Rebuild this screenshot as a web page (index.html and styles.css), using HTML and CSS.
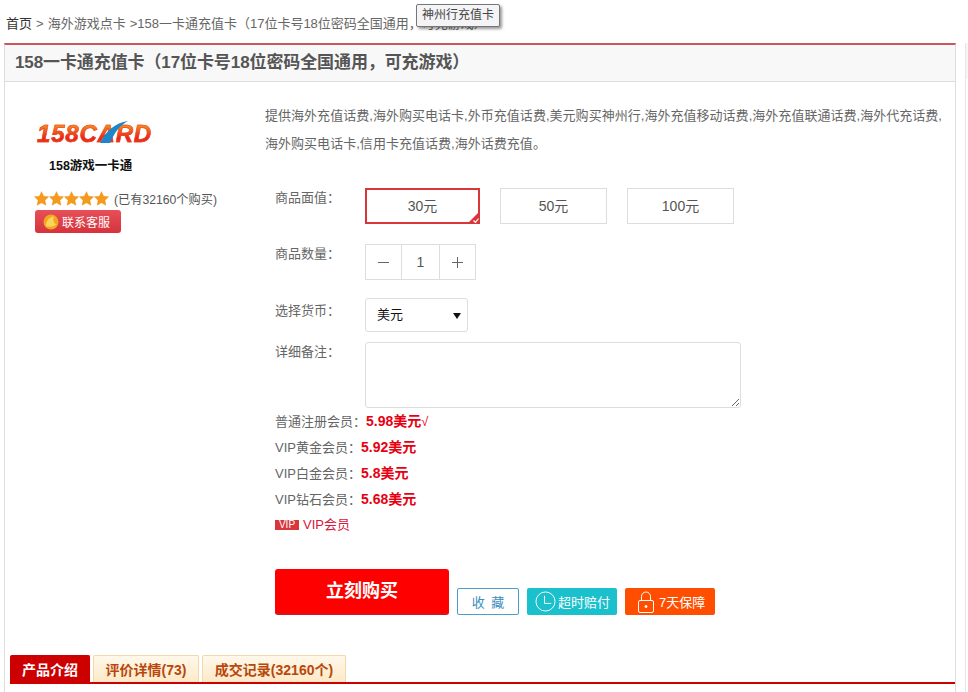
FILE: index.html
```html
<!DOCTYPE html>
<html lang="zh-CN">
<head>
<meta charset="utf-8">
<title>158一卡通充值卡</title>
<link rel="stylesheet" href="styles.css">
</head>
<body>
<nav class="crumbs"><a class="home">首页</a> &gt; 海外游戏点卡 &gt;158一卡通充值卡（17位卡号18位密码全国通用，可充游戏）</nav>
<div class="tooltip">神州行充值卡</div>
<div class="page">
  <main class="panel">
    <h1 class="title">158一卡通充值卡（17位卡号18位密码全国通用，可充游戏）</h1>
    <div class="content">
      <aside class="side">
        <div class="logo">
          <span class="logo-word">158CARD</span>
          <svg class="swoosh" width="28" height="22" viewBox="0 0 28 22"><path d="M0 22C6 10 15 2 28 0C20 4 14 12 10 22Z" fill="#1d86c8"/></svg>
        </div>
        <div class="logo-sub">158游戏一卡通</div>
        <div class="rating">
          <span class="stars">
            <svg width="15" height="15" viewBox="0 0 24 24"><path class="star" d="M12 1l3.400 7.300 7.900 1-5.800 5.500 1.500 7.900-7-3.900-7 3.900 1.500-7.900L.7 9.300l7.900-1z"/></svg>
            <svg width="15" height="15" viewBox="0 0 24 24"><path class="star" d="M12 1l3.400 7.300 7.900 1-5.800 5.500 1.500 7.900-7-3.900-7 3.900 1.500-7.900L.7 9.300l7.900-1z"/></svg>
            <svg width="15" height="15" viewBox="0 0 24 24"><path class="star" d="M12 1l3.400 7.300 7.900 1-5.800 5.500 1.500 7.900-7-3.900-7 3.900 1.500-7.900L.7 9.300l7.900-1z"/></svg>
            <svg width="15" height="15" viewBox="0 0 24 24"><path class="star" d="M12 1l3.400 7.300 7.900 1-5.800 5.500 1.500 7.900-7-3.900-7 3.900 1.500-7.900L.7 9.300l7.900-1z"/></svg>
            <svg width="15" height="15" viewBox="0 0 24 24"><path class="star" d="M12 1l3.400 7.300 7.900 1-5.800 5.500 1.500 7.900-7-3.900-7 3.900 1.500-7.900L.7 9.300l7.900-1z"/></svg>
          </span>
          <span class="sold">(已有32160个购买)</span>
        </div>
        <a class="service">
          <svg width="16" height="16" viewBox="0 0 16 16"><circle cx="8" cy="8" r="7.500" fill="#f2a81e"/><path d="M3 12C3 7 6 3 11 2.500C9.500 6 10 8.500 13.500 10.500C10 13 6 13.500 3 12Z" fill="#fbd45e"/></svg>
          <span>联系客服</span>
        </a>
      </aside>
      <section class="detail">
        <p class="desc">提供海外充值话费,海外购买电话卡,外币充值话费,美元购买神州行,海外充值移动话费,海外充值联通话费,海外代充话费,海外购买电话卡,信用卡充值话费,海外话费充值。</p>
        <div class="row row-face">
          <span class="label">商品面值：</span>
          <div class="faces">
            <a class="face face-on">30元<svg class="tick" width="13" height="13" viewBox="0 0 13 13"><path d="M13 0V13H0Z" fill="#d9363c"/><path d="M6.500 9.500l2 1.800 3-3.800" fill="none" stroke="#fff" stroke-width="1.200"/></svg></a>
            <a class="face">50元</a>
            <a class="face">100元</a>
          </div>
        </div>
        <div class="row row-qty">
          <span class="label">商品数量：</span>
          <div class="qty">
            <span class="qty-btn"><svg width="11" height="11" viewBox="0 0 11 11"><path d="M0 5.500H11" stroke="#666"/></svg></span>
            <span class="qty-num">1</span>
            <span class="qty-btn"><svg width="11" height="11" viewBox="0 0 11 11"><path d="M0 5.500H11M5.500 0V11" stroke="#666"/></svg></span>
          </div>
        </div>
        <div class="row row-cur">
          <span class="label label-cur">选择货币：</span>
          <div class="select"><span>美元</span><i class="caret"></i></div>
        </div>
        <div class="row row-note">
          <span class="label">详细备注：</span>
          <textarea class="note"></textarea>
        </div>
        <ul class="prices">
          <li>普通注册会员：<b>5.98美元</b><em>√</em></li>
          <li>VIP黄金会员：<b>5.92美元</b></li>
          <li>VIP白金会员：<b>5.8美元</b></li>
          <li>VIP钻石会员：<b>5.68美元</b></li>
          <li class="vip"><span class="vip-tag">VIP</span>VIP会员</li>
        </ul>
        <div class="actions">
          <a class="buy">立刻购买</a>
          <a class="fav">收 藏</a>
          <a class="promise promise-time">
            <svg width="21" height="21" viewBox="0 0 22 22" fill="none" stroke="#fff"><circle cx="11" cy="11" r="10"/><path d="M10 5V13H17"/></svg>
            <span>超时赔付</span>
          </a>
          <a class="promise promise-safe">
            <svg width="18" height="22" viewBox="0 0 18 22" fill="none" stroke="#fff"><rect x="1.500" y="9.500" width="15" height="12" rx="1.500"/><path d="M4.500 9.500V5.500a4.500 4.500 0 0 1 9 0V9.500"/><circle cx="9" cy="15.500" r="1" fill="#fff"/></svg>
            <span>7天保障</span>
          </a>
        </div>
      </section>
    </div>
    <div class="tabs">
      <a class="tab tab-on">产品介绍</a>
      <a class="tab">评价详情(73)</a>
      <a class="tab">成交记录(32160个)</a>
    </div>
  </main>
  <div class="next-col"></div>
</div>
</body>
</html>
```
FILE: styles.css
```css
* { box-sizing: border-box; }
html, body { margin: 0; height: 692px; overflow: hidden; background: #fff; }
body {
  position: relative;
  font-family: "Liberation Sans", "Noto Sans CJK SC", sans-serif;
  font-size: 13px;
  color: #666;
}
.crumbs { height: 43px; padding: 15px 0 0 6px; line-height: 17px; white-space: nowrap; word-spacing: .4px; color: #666; }
.home { color: #333; }
.tooltip {
  position: absolute; left: 416px; top: 4px; width: 84px; height: 23px;
  padding-left: 5px; line-height: 21px; font-size: 12px; color: #444;
  background: #f4f4f6; border: 1px solid #767676; border-radius: 2px;
  box-shadow: 2px 2px 3px rgba(0,0,0,.4);
}
.page { display: flex; width: 968px; padding-left: 4px; }
.panel { flex: none; width: 952px; height: 649px; border-left: 1px solid #ddd; border-right: 1px solid #ddd; border-top: 2px solid #c9585c; }
.next-col { flex: none; width: 3px; margin-left: 9px; height: 649px; border-left: 1px solid #e6e6e6; background: linear-gradient(180deg, #f6f6f6 36px, #fff 36px); }
.title {
  margin: 0; height: 37px; padding-left: 10px; line-height: 35px;
  font-size: 17px; font-weight: bold; letter-spacing: -.1px; color: #555;
  background: #f8f8f8; border-bottom: 1px solid #ddd;
}
.content { display: flex; height: 573px; }
.side { width: 260px; padding: 38px 0 0 28px; }
.logo { position: relative; width: 120px; height: 28px; margin: 0 0 0 4px; }
.logo-word {
  display: block; font: italic bold 24px/28px "Liberation Sans", sans-serif; letter-spacing: .8px;
  background: linear-gradient(180deg, #f7881f 20%, #e8241c 65%, #f05a1c);
  -webkit-background-clip: text; background-clip: text; color: transparent;
  -webkit-text-stroke: .5px #ea3a1c;
}
.swoosh { position: absolute; left: 63px; top: 1px; }
.logo-sub { margin: 10px 0 0 16px; font-size: 12.500px; font-weight: bold; line-height: 17px; color: #111; }
.rating { display: flex; align-items: center; height: 17px; margin: 15px 0 0 1px; }
.stars { display: flex; width: 75px; }
.star { fill: #f79a1a; stroke: #e08a10; stroke-width: .6; }
.sold { margin-left: 5px; font-size: 12.200px; color: #555; }
.service {
  display: flex; align-items: center; gap: 3px; width: 86px; height: 23px; margin: 3px 0 0 2px; padding-left: 8px;
  color: #fff; font-size: 12px; border-radius: 3px;
  background: linear-gradient(180deg, #e75058, #d6323c);
}
.detail { flex: 1; padding: 20px 0 0 0; }
.desc { margin: 0; width: 682px; line-height: 28px; letter-spacing: .03px; }
.row { display: flex; margin-left: 10px; }
.label { width: 90px; line-height: 20px; color: #666; flex: none; }
.label-cur { padding-top: 3px; }
.row-face { margin-top: 30px; }
.faces { display: flex; gap: 20px; }
.face { position: relative; width: 107px; height: 36px; line-height: 34px; font-size: 14px; text-align: center; border: 1px solid #ddd; color: #555; }
.face-on { width: 115px; border: 2px solid #d9363c; line-height: 32px; }
.tick { position: absolute; right: -2px; bottom: -2px; }
.row-qty { margin-top: 20px; }
.qty { display: flex; width: 111px; height: 36px; border: 1px solid #ddd; }
.qty-btn { display: flex; align-items: center; justify-content: center; width: 35px; }
.qty-num { width: 40px; line-height: 34px; font-size: 14px; text-align: center; border-left: 1px solid #ddd; border-right: 1px solid #ddd; color: #555; }
.row-cur { margin-top: 18px; }
.select { position: relative; width: 103px; height: 34px; padding-left: 11px; line-height: 32px; color: #111; border: 1px solid #ddd; border-radius: 3px; }
.caret { position: absolute; right: 6px; top: 14px; border: 4px solid transparent; border-top: 6px solid #111; border-bottom: 0; }
.row-note { margin-top: 10px; }
.note { display: block; width: 376px; height: 66px; padding: 0; margin: 0; border: 1px solid #ddd; border-radius: 3px; background: #fff; }
.prices { list-style: none; margin: 0 0 0 10px; padding: 0; line-height: 26px; }
.prices li { height: 26px; }
.prices b { color: #e60012; font-size: 14px; }
.prices em { font-style: normal; color: #e60012; }
.vip { color: #d9163c; display: flex; align-items: center; }
.vip-tag { width: 24px; height: 10px; margin-right: 4px; font-size: 10px; line-height: 10px; text-align: center; color: #fff; background: #d9363c; }
.actions { display: flex; align-items: flex-end; margin: 31px 0 0 10px; }
.buy {
  width: 174px; height: 46px; line-height: 44px; text-align: center;
  font-size: 18px; font-weight: bold; color: #fff; background: #f00;
  border-radius: 3px; border-bottom: 2px solid #d8141c;
}
.fav { width: 62px; height: 27px; margin-left: 8px; line-height: 27px; text-align: center; word-spacing: 3px; color: #3a8fc0; border: 1px solid #4a9ec9; border-radius: 2px; }
.promise { display: flex; align-items: center; width: 90px; height: 27px; margin-left: 8px; padding-left: 8px; gap: 2px; color: #fff; border-radius: 2px; }
.promise-time { background: #1ac0cc; }
.promise-safe { background: #ff4e00; padding-left: 12px; gap: 4px; }
.tabs { display: flex; gap: 3px; height: 29px; margin-left: 5px; border-bottom: 2px solid #c00; }
.tab {
  width: 106px; height: 27px; line-height: 28px; text-align: center;
  font-size: 14px; font-weight: bold; color: #b8470c;
  background: linear-gradient(180deg, #fff8ea, #fde9c8);
  border: 1px solid #f3d8ab; border-bottom: 0; border-radius: 2px 2px 0 0;
}
.tab-on { width: 80px; color: #fff; background: #c00; border-color: #c00; }
.tab:last-child { width: 144px; }
```
